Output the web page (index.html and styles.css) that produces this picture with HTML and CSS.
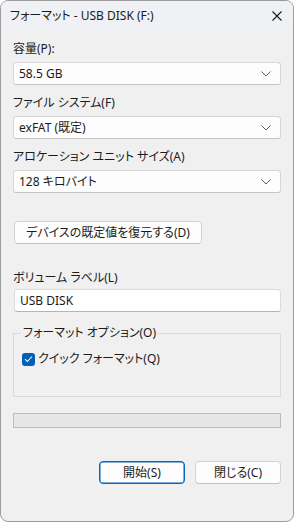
FILE: index.html
```html
<!DOCTYPE html>
<html lang="ja">
<head>
    <meta charset="UTF-8">
    <meta name="viewport" content="width=device-width, initial-scale=1.0">
    <title>フォーマット - USB DISK (F:)</title>
    <link rel="stylesheet" href="styles.css">
</head>
<body>

    <div class="window">
        <!-- Title bar -->
        <div class="titlebar">
            <span class="title">フォーマット - USB DISK (F:)</span>
            <span class="close">
                <svg width="10" height="10" viewBox="0 0 10 10">
                    <path d="M0.5 0.5 L9.5 9.5 M9.5 0.5 L0.5 9.5" stroke="#1a1a1a" stroke-width="1.1" fill="none"/>
                </svg>
            </span>
        </div>

        <div class="content">
            <div class="label">容量(P):</div>
            <div class="combo">
                <span>58.5 GB</span>
                <svg class="chevron" width="10" height="6" viewBox="0 0 10 6"><path d="M0.5 0.5 L5 5 L9.5 0.5" stroke="#5c5c5c" fill="none"/></svg>
            </div>

            <div class="label">ファイル システム(F)</div>
            <div class="combo">
                <span>exFAT (既定)</span>
                <svg class="chevron" width="10" height="6" viewBox="0 0 10 6"><path d="M0.5 0.5 L5 5 L9.5 0.5" stroke="#5c5c5c" fill="none"/></svg>
            </div>

            <div class="label">アロケーション ユニット サイズ(A)</div>
            <div class="combo">
                <span>128 キロバイト</span>
                <svg class="chevron" width="10" height="6" viewBox="0 0 10 6"><path d="M0.5 0.5 L5 5 L9.5 0.5" stroke="#5c5c5c" fill="none"/></svg>
            </div>

            <button class="btn btn-restore">デバイスの既定値を復元する(D)</button>

            <div class="label label-volume">ボリューム ラベル(L)</div>
            <div class="textbox">USB DISK</div>

            <fieldset class="options">
                <legend>フォーマット オプション(O)</legend>
                <div class="check-row">
                    <span class="checkbox">
                        <svg width="9" height="8" viewBox="0 0 9 8"><path d="M1 4.2 L3.4 6.5 L8 1.5" stroke="#fff" stroke-width="1.1" fill="none"/></svg>
                    </span>
                    <span>クイック フォーマット(Q)</span>
                </div>
            </fieldset>

            <div class="progress"></div>

            <div class="actions">
                <button class="btn btn-primary">開始(S)</button>
                <button class="btn">閉じる(C)</button>
            </div>
        </div>
    </div>

</body>
</html>
```

FILE: styles.css
```css
/* General */
body {
    margin: 0;
    background: #ffffff;
    font-family: "Noto Sans", "Noto Sans CJK JP", sans-serif;
    font-size: 12px;
    color: #1b1b1b;
    font-feature-settings: "palt";
}

.window {
    width: 292px;
    height: 520px;
    border: 1px solid #9c9c9c;
    border-radius: 8px;
    background: #f0f0f0;
    overflow: hidden;
}

/* Title bar */
.titlebar {
    height: 30px;
    background: #eff1f5;
    display: flex;
    align-items: center;
    justify-content: space-between;
    padding: 0 11px 0 9px;
}
.title {
    line-height: 16px;
}
.close {
    display: flex;
    margin-top: -1px;
}

/* Content */
.content {
    padding: 0 12px;
    display: flex;
    flex-direction: column;
}

.label {
    line-height: 16px;
    margin-top: 10px;
}
.label-volume {
    margin-top: 26px;
}

.combo {
    margin-top: 5px;
    height: 21px;
    background: #fdfdfd;
    border: 1px solid #d6d6d6;
    border-bottom-color: #c4c4c4;
    border-radius: 3px;
    display: flex;
    align-items: center;
    justify-content: space-between;
    padding: 0 9px 0 5px;
}
.combo span {
    line-height: 16px;
}

.btn {
    font: inherit;
    color: inherit;
    height: 23px;
    background: #fdfdfd;
    border: 1px solid #d3d3d3;
    border-bottom-color: #c2c2c2;
    border-radius: 4px;
    padding: 0;
    line-height: 16px;
}
.btn-restore {
    width: 188px;
    margin-top: 28px;
    margin-left: 1px;
}

.textbox {
    margin-top: 3px;
    height: 21px;
    background: #ffffff;
    border: 1px solid #dcdcdc;
    border-bottom-color: #b5b5b5;
    border-radius: 3px;
    margin-left: 1px;
    padding: 0 5px;
    display: flex;
    align-items: center;
}

/* Group box */
.options {
    margin: 13px 0 0 0;
    padding: 10px 8px 29px 8px;
    border: 1px solid #dadada;
    border-radius: 0;
    min-width: 0;
}
.options legend {
    padding: 0 2px;
    margin-left: -1px;
    line-height: 16px;
}
.check-row {
    display: flex;
    align-items: center;
    gap: 3px;
    line-height: 16px;
}
.checkbox {
    width: 13px;
    height: 13px;
    border-radius: 3px;
    background: #005fb8;
    display: flex;
    align-items: center;
    justify-content: center;
}

.progress {
    margin-top: 16px;
    height: 13px;
    background: #e6e6e6;
    border: 1px solid #bcbcbc;
}

/* Bottom buttons */
.actions {
    margin-top: 33px;
    display: flex;
    justify-content: flex-end;
    gap: 10px;
}
.actions .btn {
    width: 86px;
}
.btn-primary {
    border-color: #0067c0;
    border-width: 1px;
    box-shadow: inset 0 0 0 0.5px #0067c0;
}
```
